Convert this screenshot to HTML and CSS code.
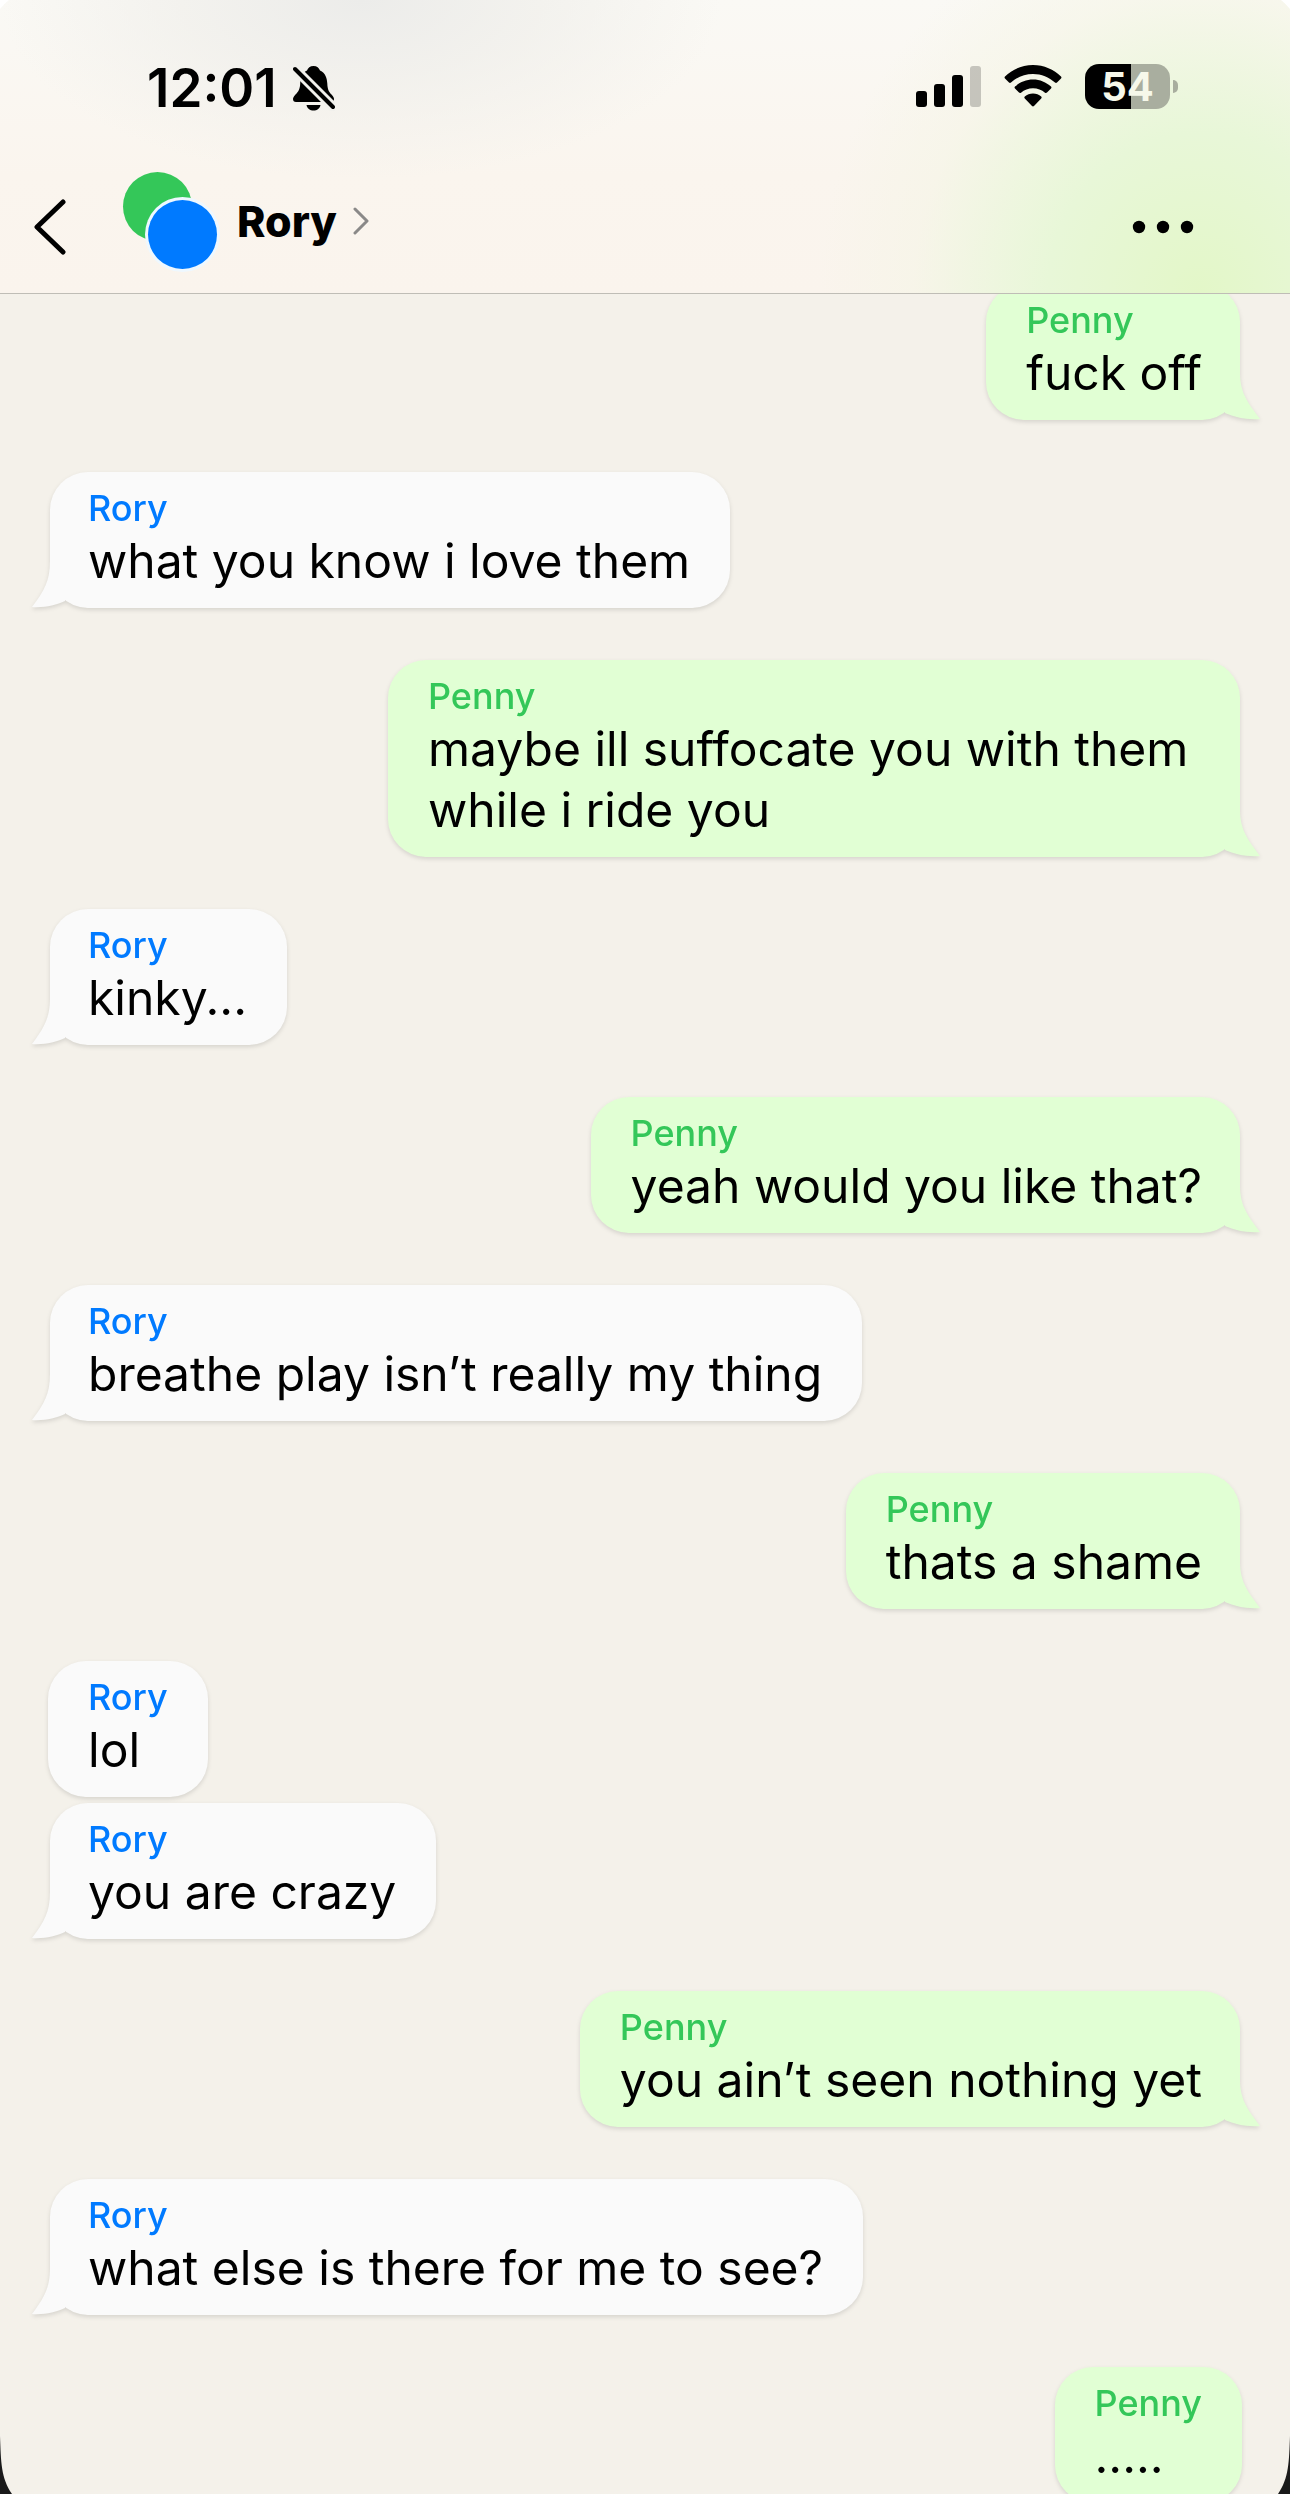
FILE: index.html
```html
<!DOCTYPE html>
<html lang="en">
<head>
<meta charset="utf-8">
<meta name="viewport" content="width=device-width, initial-scale=1">
<title>Rory</title>
<link rel="stylesheet" href="styles.css">
</head>
<body>
<div class="screen">
  <header class="topbar">
    <div class="status">
      <div class="status-left">
        <time class="clock">12:01</time>
        <svg class="bell" viewBox="0 0 42 46" width="42" height="46" aria-label="Silent mode">
          <path d="M20.500 1C17 1 15 3 14 5.500C8.500 8 7.500 13 7.200 18.500C7 24 5.500 26.500 2.500 29.500C.5 31.500 0 33 0 34C0 36 1 37 3 37H38C40 37 41 36 41 34C41 33 40.500 31.500 38.500 29.500C35.500 26.500 34.500 24 34.300 18.500C34 13 32.500 8 27 5.500C26 3 24 1 20.500 1Z"/>
          <path d="M13.500 40H27.500C27 43.500 24 45.500 20.500 45.500C17 45.500 14 43.500 13.500 40Z"/>
          <path class="bell-gap" d="M2 4L40 42"/>
          <path class="bell-slash" d="M2 4L40 42"/>
        </svg>
      </div>
      <div class="status-right">
        <svg viewBox="0 0 65 41" width="65" height="41" aria-label="Signal">
          <rect x="0" y="25" width="11" height="16" rx="3"/>
          <rect x="18" y="18" width="11" height="23" rx="3"/>
          <rect x="36" y="9" width="11" height="32" rx="3"/>
          <rect x="54" y="0" width="11" height="41" rx="3" opacity=".2"/>
        </svg>
        <svg viewBox="0 0 58 42" width="58" height="42" aria-label="Wi-Fi">
          <path d="M29 0C18 0 8 4.500 1 11.500C.4 12.200.4 13 1 13.600L5 17.600C5.600 18.200 6.400 18.200 7 17.600C13 12 20.500 8.900 29 8.900S45 12 51 17.600C51.600 18.200 52.400 18.200 53 17.600L57 13.600C57.600 13 57.600 12.200 57 11.500C50 4.500 40 0 29 0Z"/>
          <path d="M29 14.500C22 14.500 15.800 17.200 11 21.600C10.400 22.200 10.400 23 11 23.600L15 27.600C15.600 28.200 16.400 28.200 17 27.700C20.300 24.800 24.400 23.200 29 23.200S37.700 24.800 41 27.700C41.600 28.200 42.400 28.200 43 27.600L47 23.600C47.600 23 47.600 22.200 47 21.600C42.200 17.200 36 14.500 29 14.500Z"/>
          <path d="M29 28.500C25.800 28.500 23 29.600 20.800 31.500C20.200 32.100 20.200 32.900 20.800 33.500L28 41C28.600 41.600 29.400 41.600 30 41L37.200 33.500C37.800 32.900 37.800 32.100 37.200 31.500C35 29.600 32.200 28.500 29 28.500Z"/>
        </svg>
        <div class="battery"><span class="battery-level">54</span></div>
      </div>
    </div>
    <nav class="navbar">
      <button class="back" type="button" aria-label="Back">
        <svg viewBox="0 0 32 56" width="32" height="56"><path d="M29 3L3 28L29 53"/></svg>
      </button>
      <button class="contact" type="button">
        <span class="avatars"><span class="avatar avatar-green"></span><span class="avatar avatar-blue"></span></span>
        <span class="contact-name">Rory</span>
        <svg class="chevron" viewBox="0 0 16 28" width="16" height="28"><path d="M2 2L14 14L2 26"/></svg>
      </button>
      <button class="more" type="button" aria-label="More">
        <svg viewBox="0 0 62 14" width="62" height="14"><circle cx="7" cy="7" r="6.200"/><circle cx="31" cy="7" r="6.200"/><circle cx="55" cy="7" r="6.200"/></svg>
      </button>
    </nav>
  </header>

  <main class="chat">
    <article class="bubble sent tail"><h2 class="sender">Penny</h2><p class="text">fuck off</p></article>
    <article class="bubble received tail"><h2 class="sender">Rory</h2><p class="text">what you know i love them</p></article>
    <article class="bubble sent tail"><h2 class="sender">Penny</h2><p class="text">maybe ill suffocate you with them while i ride you</p></article>
    <article class="bubble received tail"><h2 class="sender">Rory</h2><p class="text">kinky...</p></article>
    <article class="bubble sent tail"><h2 class="sender">Penny</h2><p class="text">yeah would you like that?</p></article>
    <article class="bubble received tail"><h2 class="sender">Rory</h2><p class="text">breathe play isn’t really my thing</p></article>
    <article class="bubble sent tail"><h2 class="sender">Penny</h2><p class="text">thats a shame</p></article>
    <div class="group">
      <article class="bubble received"><h2 class="sender">Rory</h2><p class="text">lol</p></article>
      <article class="bubble received tail"><h2 class="sender">Rory</h2><p class="text">you are crazy</p></article>
    </div>
    <article class="bubble sent tail"><h2 class="sender">Penny</h2><p class="text">you ain’t seen nothing yet</p></article>
    <article class="bubble received tail"><h2 class="sender">Rory</h2><p class="text">what else is there for me to see?</p></article>
    <article class="bubble sent"><h2 class="sender">Penny</h2><p class="text">.....</p></article>
  </main>

  <svg class="corner top left" viewBox="0 0 9 9" width="9" height="9"><path d="M0 0H9Q4 4 0 9Z"/></svg>
  <svg class="corner top right" viewBox="0 0 9 9" width="9" height="9"><path d="M0 0H9Q4 4 0 9Z"/></svg>
  <svg class="corner bottom left" viewBox="0 0 12 58" width="12" height="58"><path d="M0 0C1 26 1 42 12 58H0Z"/></svg>
  <svg class="corner bottom right" viewBox="0 0 12 58" width="12" height="58"><path d="M0 0C1 26 1 42 12 58H0Z"/></svg>
</div>
</body>
</html>
```

FILE: styles.css
```css
* {
  box-sizing: border-box;
}

body {
  margin: 0;
  background: #f4f1ea;
  color: #000;
  font-family: Inter, "Liberation Sans", sans-serif;
}

button {
  display: flex;
  align-items: center;
  padding: 0;
  border: 0;
  background: none;
  color: inherit;
  font: inherit;
}

.screen {
  position: relative;
  display: flex;
  flex-direction: column;
  height: 100vh;
  overflow: hidden;
}

/* Header */

.topbar {
  position: relative;
  z-index: 1;
  flex: none;
  border-bottom: 1px solid #bfbdb6;
  background:
    radial-gradient(ellipse 380px 400px at 93% 100%, #e3f7c8 0%, #e8f7d8 40%, rgba(245, 245, 230, 0.6) 75%, rgba(250, 245, 238, 0) 100%),
    radial-gradient(ellipse 360px 180px at 28% 0%, #ececea 0%, rgba(240, 239, 235, 0.7) 50%, rgba(249, 244, 237, 0) 100%),
    linear-gradient(#faf9f5, #faf5ee 60%, #faf4ed);
}

.status {
  display: flex;
  align-items: center;
  justify-content: space-between;
  height: 172px;
  padding: 0 112px 0 147px;
}

.status-left {
  display: flex;
  align-items: center;
  gap: 16px;
  padding-top: 4px;
}

.clock {
  font-size: 53px;
  font-weight: 600;
  line-height: 64px;
}

.bell-gap,
.bell-slash {
  fill: none;
  stroke: #000;
  stroke-width: 4;
  stroke-linecap: round;
}

.bell-gap {
  stroke: #f1f0ec;
  stroke-width: 10;
}

.status-right {
  display: flex;
  align-items: center;
  gap: 23px;
}

.battery {
  position: relative;
  width: 85px;
  height: 45px;
  margin-right: 8px;
  border-radius: 14px;
  background: linear-gradient(90deg, #000 54%, #a9ae9f 54%);
}

.battery::after {
  content: "";
  position: absolute;
  top: 16px;
  left: 88px;
  width: 5px;
  height: 13px;
  border-radius: 0 6px 6px 0;
  background: #a9ae9f;
}

.battery-level {
  display: block;
  color: #f6f8ea;
  font-size: 40px;
  font-weight: 700;
  line-height: 45px;
  text-align: center;
}

.navbar {
  display: flex;
  align-items: center;
  height: 121px;
  padding: 0 96px 24px 34px;
}

.back path,
.chevron path {
  fill: none;
  stroke: #000;
  stroke-width: 5;
  stroke-linecap: round;
  stroke-linejoin: round;
}

.back {
  padding-top: 12px;
}

.contact {
  margin-left: 57px;
}

.avatars {
  position: relative;
  width: 94px;
  height: 97px;
}

.avatar {
  position: absolute;
  width: 69px;
  height: 69px;
  border-radius: 50%;
}

.avatar-green {
  top: 0;
  left: 0;
  background: #34c759;
}

.avatar-blue {
  right: 0;
  bottom: 0;
  background: #007aff;
  box-shadow: 0 0 0 3px #eef8ff;
}

.contact-name {
  margin-left: 20px;
  font-size: 43px;
  font-weight: 800;
  line-height: 60px;
}

.chevron {
  margin-left: 16px;
}

.chevron path {
  stroke: #8a8988;
  stroke-width: 3;
}

.more {
  margin-left: auto;
  padding-top: 12px;
}

/* Conversation */

.chat {
  display: flex;
  flex: 1;
  flex-direction: column;
  gap: 52px;
  min-height: 0;
  margin-top: -10px;
  padding: 0 48px;
}

.group {
  display: flex;
  flex-direction: column;
  gap: 6px;
}

.bubble {
  position: relative;
  flex: none;
  max-width: 852px;
  padding: 14px 40px 17px;
  border-radius: 38px;
  filter: drop-shadow(0 2px 2px rgba(0, 0, 0, 0.12));
}

.received {
  align-self: flex-start;
  background: #fafafa;
}

.sent {
  align-self: flex-end;
  background: #e1ffd4;
}

.received.tail {
  margin-left: 2px;
  padding-left: 38px;
}

.sent.tail {
  margin-right: 2px;
  padding-right: 38px;
}

.tail::after {
  content: "";
  position: absolute;
  bottom: 0;
  width: 35px;
  height: 47px;
  background: inherit;
}

.received.tail::after {
  left: -18px;
  clip-path: path("M18 0C18 20 12 30 0 46C12 47 24 44 33 40L33 0Z");
}

.sent.tail::after {
  right: -20px;
  clip-path: path("M15 0C15 20 23 30 35 46C21 47 10 44 0 40L0 0Z");
}

.sender,
.text {
  margin: 0;
}

.sender {
  font-size: 36px;
  font-weight: 500;
  line-height: 44px;
}

.received .sender {
  color: #007aff;
}

.sent .sender {
  color: #34c759;
}

.text {
  font-size: 48px;
  line-height: 61px;
}

/* Rounded corners of the display */

.corner {
  position: absolute;
  z-index: 2;
  fill: #1a1a1a;
}

.corner.top {
  top: 0;
  fill: #fff;
}

.corner.bottom {
  bottom: 0;
}

.corner.left {
  left: 0;
}

.corner.right {
  right: 0;
  transform: scaleX(-1);
}
```
